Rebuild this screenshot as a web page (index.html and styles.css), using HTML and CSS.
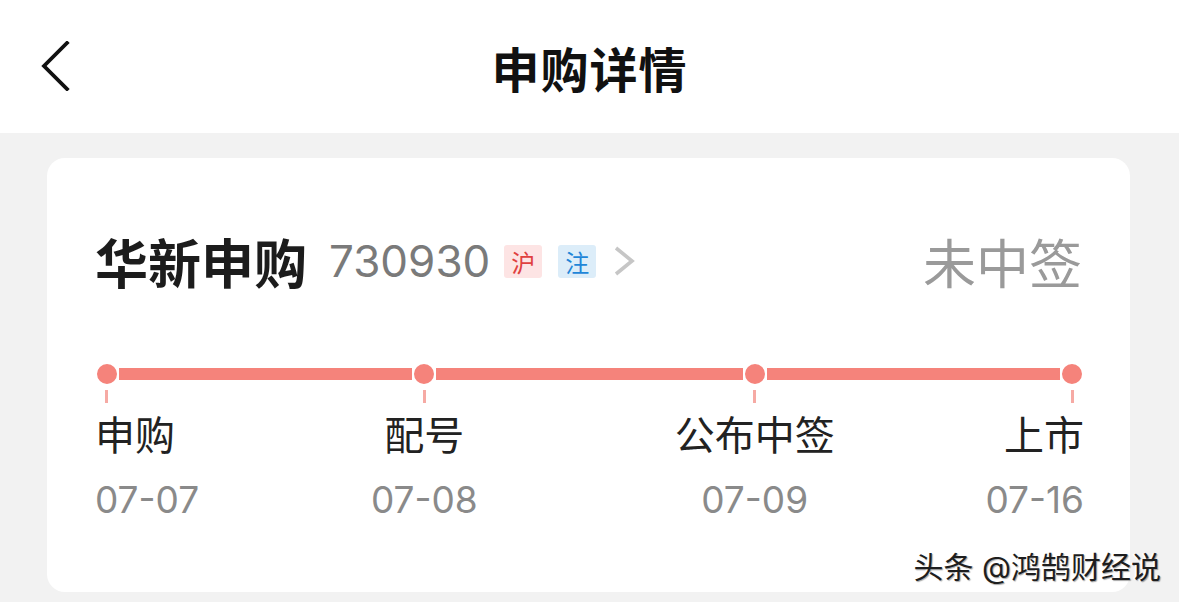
FILE: index.html
```html
<!DOCTYPE html>
<html lang="zh-CN">
<head>
  <meta charset="UTF-8" />
  <meta name="viewport" content="width=device-width, initial-scale=1.0" />
  <title>申购详情</title>
  <link rel="stylesheet" href="styles.css">
</head>
<body>

<header class="topbar">
  <a class="back" href="#">
    <svg width="30" height="50" viewBox="0 0 30 50">
      <path d="M26 2 L3 25 L26 48" fill="none" stroke="#111" stroke-width="3.8" stroke-linecap="square" />
    </svg>
  </a>
  <h1>申购详情</h1>
  <span></span>
</header>

<main class="page">
  <section class="card">
    <div class="stock-row">
      <div class="stock">
        <span class="name">华新申购</span>
        <span class="code">730930</span>
        <span class="tag tag-sh">沪</span>
        <span class="tag tag-reg">注</span>
        <svg class="arrow" width="26" height="30" viewBox="0 0 26 30">
          <path d="M4 2 L20 15 L4 28" fill="none" stroke="#c6c6c6" stroke-width="3.6" />
        </svg>
      </div>
      <span class="result">未中签</span>
    </div>

    <div class="timeline">
      <div class="step first">
        <i class="dot"></i><i class="tick"></i>
        <span class="label">申购</span>
        <span class="date">07-07</span>
      </div>
      <div class="seg seg-a"></div>
      <div class="step">
        <i class="dot"></i><i class="tick"></i>
        <span class="label">配号</span>
        <span class="date">07-08</span>
      </div>
      <div class="seg seg-b"></div>
      <div class="step">
        <i class="dot"></i><i class="tick"></i>
        <span class="label">公布中签</span>
        <span class="date">07-09</span>
      </div>
      <div class="seg seg-a"></div>
      <div class="step last">
        <i class="dot"></i><i class="tick"></i>
        <span class="label">上市</span>
        <span class="date">07-16</span>
      </div>
    </div>
  </section>
</main>

<div class="watermark">头条 @鸿鹄财经说</div>

</body>
</html>
```

FILE: styles.css
```css
body {
  margin: 0;
  padding: 0;
  font-family: 'Inter', 'Noto Sans CJK SC', sans-serif;
  background: #f2f2f2;
  color: #222;
  width: 1179px;
  height: 602px;
  overflow: hidden;
  position: relative;
}

/* top navigation */
.topbar {
  height: 133px;
  background: #fff;
  display: grid;
  grid-template-columns: 1fr auto 1fr;
  align-items: center;
}

.back {
  display: flex;
  padding-left: 41px;
  padding-bottom: 2px;
}

.topbar h1 {
  margin: 0;
  font-size: 48px;
  font-weight: 700;
  color: #111;
  letter-spacing: 1px;
}

.page {
  padding: 25px 49px 0 47px;
}

.card {
  background: #fff;
  border-radius: 18px;
  padding: 73px 46px 70px 48px;
}

/* stock name row */
.stock-row {
  height: 60px;
  display: flex;
  align-items: center;
  justify-content: space-between;
}

.stock {
  display: flex;
  align-items: center;
}

.name {
  font-size: 53px;
  font-weight: 700;
  color: #1c1c1c;
}

.code {
  font-size: 44px;
  color: #7a7a7a;
  margin-left: 22px;
}

.tag {
  width: 38px;
  height: 33px;
  display: flex;
  align-items: center;
  justify-content: center;
  font-size: 24px;
  border-radius: 3px;
  margin-left: 14px;
}

.tag-sh {
  background: #fde4e4;
  color: #e0403f;
}

.tag-reg {
  background: #dcedf9;
  color: #1f86d8;
  margin-left: 16px;
}

.arrow {
  margin-left: 16px;
}

.result {
  font-size: 53px;
  color: #9a9a9a;
  margin-right: 2px;
}

/* progress timeline */
.timeline {
  display: flex;
  margin-top: 71px;
}

.step {
  width: 24px;
  display: flex;
  flex-direction: column;
  align-items: center;
  white-space: nowrap;
}

.step.first {
  align-items: flex-start;
}

.step.last {
  align-items: flex-end;
}

.dot {
  width: 24px;
  height: 24px;
  box-sizing: border-box;
  border-radius: 50%;
  background: #f5837b;
  border: 2px solid #fff;
}

.tick {
  width: 3px;
  height: 13px;
  margin-top: 4px;
  background: #f6aaa4;
}

.step.first .tick {
  margin-left: 10px;
}

.step.last .tick {
  margin-right: 10px;
}

.label {
  font-size: 40px;
  line-height: 48px;
  margin-top: 9px;
  color: #222;
}

.date {
  font-size: 37px;
  line-height: 44px;
  margin-top: 18px;
  color: #8a8a8a;
}

.seg {
  height: 12px;
  margin-top: 6px;
  background: #f5837b;
}

.seg-a {
  flex: 294;
}

.seg-b {
  flex: 307;
}

/* site stamp over the corner */
.watermark {
  position: absolute;
  right: 18px;
  bottom: 15px;
  font-size: 30px;
  color: #1e1e1e;
  text-shadow: -2px 0 0 rgba(255, 255, 255, 0.9), 1px 1px 1px rgba(0, 0, 0, 0.35);
}
```
